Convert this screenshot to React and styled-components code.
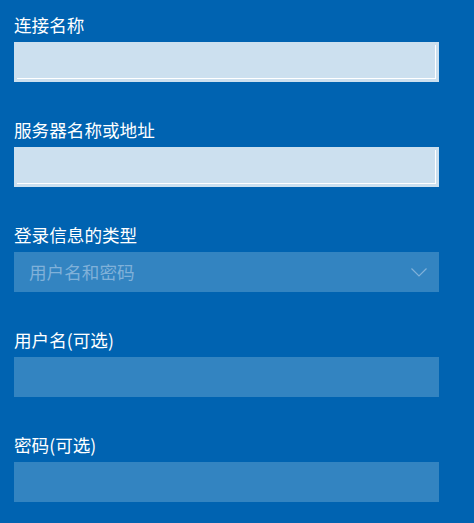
import React from 'react';
import styled, { createGlobalStyle } from 'styled-components';

const GlobalStyle = createGlobalStyle`
  html, body {
    margin: 0;
    padding: 0;
    background: #0063b1;
  }
  body {
    font-family: "Noto Sans CJK SC", "Noto Sans", sans-serif;
  }
`;

const Page = styled.div`
  width: 474px;
  height: 523px;
  background: #0063b1;
  padding: 13px 35px 0 14px;
  box-sizing: border-box;
  overflow: hidden;
`;

const Field = styled.div`
  display: flex;
  flex-direction: column;
  margin-bottom: 36px;
`;

const Label = styled.label`
  color: #ffffff;
  font-size: 17.6px;
  line-height: 24px;
  height: 24px;
  margin-bottom: 5px;
`;

const TextBox = styled.div`
  height: 40px;
  box-sizing: border-box;
  background: ${props => (props.active ? '#cce0ef' : '#3384c1')};
  border: ${props => (props.active ? '3px solid #cce0ef' : 'none')};
  box-shadow: ${props => (props.active ? 'inset -1px -1px 0 #ffffff' : 'none')};
`;

const Select = styled.div`
  height: 40px;
  background: #3384c1;
  display: flex;
  align-items: center;
  justify-content: space-between;
  padding: 0 12px 0 15px;
  box-sizing: border-box;
`;

const SelectValue = styled.span`
  color: #80b1d9;
  font-size: 17.6px;
  line-height: 24px;
`;

const Chevron = () => (
  <svg width="16" height="9" viewBox="0 0 16 9">
    <polyline points="0.5,0.5 8,8 15.5,0.5" fill="none" stroke="#80b1d9" strokeWidth="1.2" />
  </svg>
);

export default function App() {
  return (
    <>
      <GlobalStyle />
      <Page>
        <Field>
          <Label>连接名称</Label>
          <TextBox active />
        </Field>
        <Field>
          <Label>服务器名称或地址</Label>
          <TextBox active />
        </Field>
        <Field>
          <Label>登录信息的类型</Label>
          <Select>
            <SelectValue>用户名和密码</SelectValue>
            <Chevron />
          </Select>
        </Field>
        <Field>
          <Label>用户名(可选)</Label>
          <TextBox />
        </Field>
        <Field>
          <Label>密码(可选)</Label>
          <TextBox />
        </Field>
      </Page>
    </>
  );
}
